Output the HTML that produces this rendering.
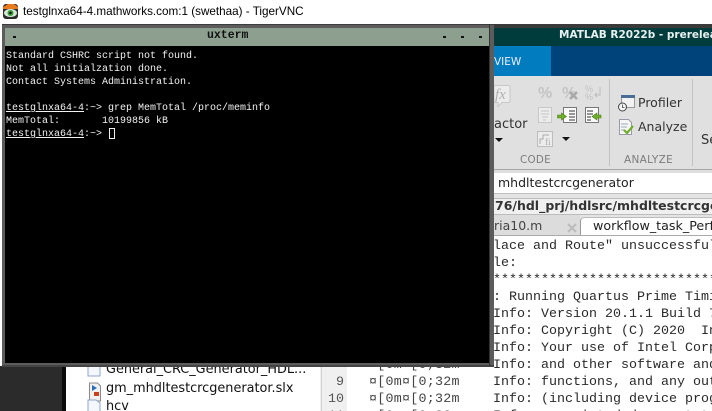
<!DOCTYPE html>
<html><head><meta charset="utf-8"><style>
html,body{margin:0;padding:0;background:#fff}
#r{position:relative;width:712px;height:411px;overflow:hidden;background:#fff;font-family:"Liberation Sans",sans-serif}
#r div,#r span.a{position:absolute;white-space:pre}
.m{font-family:"Liberation Mono",monospace;font-size:13.33px;line-height:17px;color:#2a2a2a}
.t{font-family:"Liberation Mono",monospace;font-size:10px;line-height:13px;color:#f2f2f2;left:6px}
.d{font-family:"DejaVu Sans",sans-serif}
u{text-underline-offset:1px}
</style></head><body><div id="r">
<!-- VNC title bar -->
<div style="left:0;top:0;width:712px;height:23px;background:#fff"></div>
<svg style="position:absolute;left:2px;top:3px" width="17" height="17" viewBox="0 0 17 17"><rect x="1" y="1" width="15" height="15" rx="3" fill="#2c2c2c"/><path d="M1 4L6 1h6l4 3v2H1z" fill="#e8791c"/><ellipse cx="8.5" cy="10" rx="6.5" ry="4" fill="#d8e8d8"/><circle cx="8.5" cy="10" r="3" fill="#3a9a3a"/><circle cx="8.5" cy="10" r="1.2" fill="#111"/></svg>
<div style="left:23px;top:4px;line-height:16px;color:#000;font-family:'Liberation Sans',sans-serif;font-size:11.7px">testglnxa64-4.mathworks.com:1 (swethaa) - TigerVNC</div>

<!-- desktop bottom-left -->
<div style="left:0;top:366px;width:62px;height:45px;background:#2b2b2b"></div>
<div style="left:62px;top:366px;width:4px;height:45px;background:#0a0a0a"></div>
<div style="left:66px;top:366px;width:254px;height:45px;background:#fff"></div>
<svg style="position:absolute;left:86px;top:362px" width="16" height="49" viewBox="0 0 16 49"><path d="M2 0v14h12V0" fill="#f4f7fc" stroke="#8fa6c8"/><path d="M3.500 21h8l3 3v15h-11z" fill="#f0f0f0" stroke="#8a8a8a"/><path d="M6 23l5 3-5 3z" fill="#2a6fb5"/><rect x="8" y="30" width="5" height="4" fill="#c8401c"/><path d="M2 49V38h8l4 3v8" fill="#f4f7fc" stroke="#8fa6c8"/></svg>
<div class="d" style="left:106px;top:362px;font-size:12.85px;line-height:16px;color:#111">General_CRC_Generator_HDL...</div>
<div class="d" style="left:106px;top:381px;font-size:12.85px;line-height:16px;color:#111">gm_mhdltestcrcgenerator.slx</div>
<div class="d" style="left:106px;top:399px;font-size:12.85px;line-height:16px;color:#111">hcv</div>

<!-- editor gutter -->
<div style="left:320px;top:366px;width:27px;height:45px;background:#f0f0f0"></div>
<div style="left:321px;top:366px;width:1px;height:45px;background:#d0d0d0"></div>
<div class="m" style="left:336px;top:374px;color:#555">9</div>
<div class="m" style="left:328px;top:391px;color:#555">10</div>
<div class="m" style="left:328px;top:408px;color:#555">11</div>
<div class="m" style="left:369px;top:357px;color:#444;letter-spacing:.25px">¤[0m¤[0;32m</div>
<div class="m" style="left:369px;top:374px;color:#444;letter-spacing:.25px">¤[0m¤[0;32m</div>
<div class="m" style="left:369px;top:391px;color:#444;letter-spacing:.25px">¤[0m¤[0;32m</div>
<div class="m" style="left:369px;top:408px;color:#444;letter-spacing:.25px">¤[0m¤[0;32m</div>

<!-- MATLAB -->
<div style="left:494px;top:24px;width:218px;height:4px;background:#3a3a3a"></div>
<div style="left:494px;top:28px;width:218px;height:18px;background:#013c3c"></div>
<div class="d" style="left:559px;top:27px;font-size:10.500px;line-height:16px;font-weight:bold;color:#e8f0f0">MATLAB R2022b - prerelease</div>
<div style="left:494px;top:46px;width:218px;height:30px;background:#00427a"></div>
<div style="left:494px;top:46px;width:57px;height:30px;background:#007cbf"></div>
<div class="d" style="left:494px;top:55px;font-size:10.500px;line-height:14px;color:#eef">VIEW</div>
<div style="left:494px;top:76px;width:218px;height:94px;background:#e0e0e0"></div>
<div style="left:609px;top:79px;width:1px;height:87px;background:#c2c2c2"></div>
<div style="left:692px;top:79px;width:1px;height:87px;background:#c2c2c2"></div>
<div style="left:494px;top:169px;width:218px;height:1px;background:#a8a8a8"></div>
<svg style="position:absolute;left:494px;top:76px" width="218" height="94" viewBox="0 0 218 94">
<path d="M0 9.500h14q2 0 2 2v13q0 2-2 2H8l-4 4v-4H0z" fill="#ececec" stroke="#c8c8c8"/>
<text x="1" y="23" font-family="Liberation Serif" font-style="italic" font-size="15" fill="#b0b0b0">fx</text>
<text x="44" y="22" font-family="Liberation Sans" font-weight="bold" font-size="16" fill="#c4c4c4">%</text>
<text x="68" y="22" font-family="Liberation Sans" font-weight="bold" font-size="16" fill="#c4c4c4">%</text>
<path d="M76 16l7 7m0-7l-7 7" stroke="#a9a9a9" stroke-width="2.500"/>
<text x="91" y="16" font-family="Liberation Sans" font-size="9" fill="#c0c0c0">%</text>
<text x="91" y="24" font-family="Liberation Sans" font-size="9" fill="#c0c0c0">%</text>
<path d="M106 11v8h-5m2-2l-2 2 2 2" fill="none" stroke="#bbb"/>
<rect x="44.500" y="31.500" width="13" height="15" fill="#ececec" stroke="#c8c8c8"/>
<path d="M47 35h8M47 38h8M48 41h6M49 44h3" stroke="#c4c4c4"/>
<rect x="69.500" y="31.500" width="13" height="15" fill="#fbfbfb" stroke="#777"/>
<path d="M75 35h6M75 38h6M75 41h6M75 44h6" stroke="#333"/>
<path d="M67.500 37v2h-4v3h4v2l5-3.500z" fill="#6fae2a" stroke="#4b7f18" stroke-width=".6"/>
<rect x="91.500" y="31.500" width="13" height="15" fill="#fbfbfb" stroke="#777"/>
<path d="M93 35h6M93 38h6M93 41h4M93 44h4" stroke="#333"/>
<path d="M98 40.500l5-3.500v2h4v3h-4v2z" fill="#6fae2a" stroke="#4b7f18" stroke-width=".6"/>
<rect x="43.500" y="55.500" width="15" height="15" fill="#ececec" stroke="#bdbdbd"/>
<path d="M46 68v-5h3v-4h6" fill="none" stroke="#aaa"/>
<text x="51" y="69" font-family="Liberation Serif" font-size="9" fill="#aaa">fi</text>
<path d="M1 62h8l-4 4z" fill="#111"/><path d="M68 61h8l-4 4z" fill="#111"/>
<rect x="127.500" y="19.500" width="13" height="12" fill="#f2f2f2" stroke="#999"/><rect x="127" y="19" width="14" height="3" fill="#4a6d96"/>
<circle cx="128.500" cy="31" r="4" fill="#f6f6f6" stroke="#444"/><path d="M128.500 28.500v3h2" fill="none" stroke="#444" stroke-width=".8"/>
<path d="M125.500 43.500h9l3 3v12h-12z" fill="#f6f6f6" stroke="#99a"/><path d="M127 48h7M127 51h6M127 54h4" stroke="#9ab"/>
<path d="M130 54l3 3 6-7" fill="none" stroke="#6fae2a" stroke-width="2.200"/>
</svg>
<div class="d" style="left:638px;top:95px;font-size:12.500px;line-height:16px;color:#333">Profiler</div>
<div class="d" style="left:638px;top:119px;font-size:12.500px;line-height:16px;color:#333">Analyze</div>
<div class="d" style="left:494px;top:117px;font-size:13px;line-height:16px;color:#333">actor</div>
<div class="d" style="left:701px;top:133px;font-size:13px;line-height:16px;color:#333">Se</div>
<div class="d" style="left:520px;top:153px;font-size:10.300px;line-height:14px;color:#7c7c7c;letter-spacing:.3px">CODE</div>
<div class="d" style="left:624px;top:153px;font-size:10.500px;line-height:14px;color:#7c7c7c;letter-spacing:.3px">ANALYZE</div>

<div style="left:494px;top:170px;width:218px;height:28px;background:#fff"></div>
<div style="left:494px;top:170px;width:218px;height:3px;background:#dedede"></div>
<div class="d" style="left:498px;top:175px;font-size:12.500px;line-height:16px;color:#222">mhdltestcrcgenerator</div>
<div style="left:494px;top:193px;width:218px;height:1px;background:#c0c0c0"></div>
<div style="left:494px;top:194px;width:218px;height:24px;background:#e4e4e4"></div>
<div style="left:494px;top:198px;width:218px;height:1px;background:#bcbcbc"></div>
<div style="left:494px;top:199px;width:218px;height:15px;background:#f0f0f0"></div>
<div class="d" style="left:495px;top:198px;font-size:12.500px;line-height:16px;font-weight:bold;color:#333">76/hdl_prj/hdlsrc/mhdltestcrcgenerator</div>
<div style="left:494px;top:214px;width:218px;height:1px;background:#bcbcbc"></div>
<div style="left:494px;top:215px;width:86px;height:20px;background:#dcdcdc"></div>
<div class="d" style="left:494px;top:218px;font-size:12.500px;line-height:16px;color:#444">ria10.m</div>
<svg style="position:absolute;left:567px;top:223px" width="11" height="11"><path d="M1 1l8 8m0-8l-8 8" stroke="#bbb" stroke-width="2"/></svg>
<div style="left:580px;top:217px;width:132px;height:18px;background:#fff;border-left:1px solid #999;border-top:1px solid #bbb;border-radius:4px 0 0 0"></div>
<div class="d" style="left:593px;top:218px;font-size:12.700px;line-height:16px;color:#222">workflow_task_PerformPlaceAndRoute</div>
<div style="left:494px;top:235px;width:218px;height:1px;background:#aaa"></div>
<div style="left:494px;top:236px;width:218px;height:130px;background:#fff"></div>
<div class="m" style="left:493px;top:238px">lace and Route" unsuccessful</div>
<div class="m" style="left:493px;top:255px">le:</div>
<div class="m" style="left:493px;top:272px">****************************</div>
<div class="m" style="left:493px;top:289px">: Running Quartus Prime Timing</div>
<div class="m" style="left:493px;top:306px">Info: Version 20.1.1 Build 720</div>
<div class="m" style="left:493px;top:323px">Info: Copyright (C) 2020  Intel</div>
<div class="m" style="left:493px;top:340px">Info: Your use of Intel Corpora</div>
<div class="m" style="left:493px;top:357px">Info: and other software and</div>
<div class="m" style="left:493px;top:374px">Info: functions, and any output</div>
<div class="m" style="left:493px;top:391px">Info: (including device program</div>
<div class="m" style="left:493px;top:408px">Info: associated documentation</div>

<!-- xterm window -->
<div style="left:2px;top:24px;width:492px;height:343px;background:#5c5c5c"></div>
<div style="left:2px;top:24px;width:492px;height:1px;background:#3c3c3c"></div>
<div style="left:2px;top:365px;width:492px;height:2px;background:#444"></div>
<div style="left:489px;top:24px;width:1px;height:342px;background:#333"></div>
<div style="left:5px;top:28px;width:484px;height:18px;background:#8d9f8f"></div>
<div style="left:5px;top:46px;width:484px;height:317px;background:#000"></div>
<div style="left:13px;top:36px;width:3px;height:2px;background:#111"></div>
<div style="left:443px;top:36px;width:3px;height:2px;background:#111"></div>
<div style="left:461px;top:36px;width:3px;height:2px;background:#111"></div>
<div style="left:479px;top:36px;width:3px;height:2px;background:#111"></div>
<div style="left:207px;top:28px;font-family:'Liberation Mono',monospace;font-size:11.500px;line-height:15px;font-weight:bold;color:#111">uxterm</div>
<div class="t" style="top:50px">Standard CSHRC script not found.</div>
<div class="t" style="top:63px">Not all initialzation done.</div>
<div class="t" style="top:76px">Contact Systems Administration.</div>
<div class="t" style="top:102px"><u>testglnxa64-4</u>:~&gt; grep MemTotal /proc/meminfo</div>
<div class="t" style="top:115px">MemTotal:       10199856 kB</div>
<div class="t" style="top:128px"><u>testglnxa64-4</u>:~&gt; </div>
<div style="left:109px;top:128px;width:4px;height:9px;border:1px solid #f2f2f2"></div>
</div></body></html>
